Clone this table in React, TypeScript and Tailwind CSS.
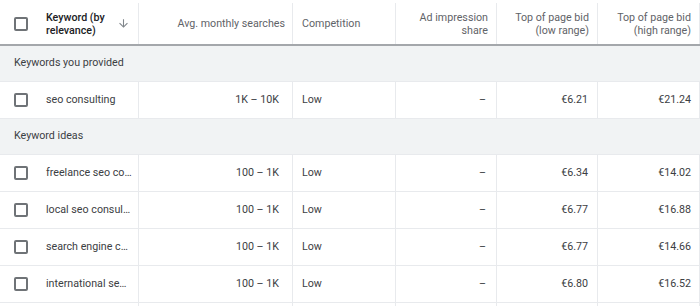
import React from "react";

const cols = "grid grid-cols-[139px_154px_103px_101px_101px_102px]";

function Checkbox() {
  return <div className="w-[14px] h-[14px] border-2 border-[#6f7377] rounded-[2px] shrink-0" />;
}

function ArrowDown() {
  return (
    <svg width="13" height="13" viewBox="0 0 24 24" className="shrink-0">
      <path d="M20 12l-1.41-1.41L13 16.17V4h-2v12.17l-5.58-5.59L4 12l8 8 8-8z" fill="#80868b" />
    </svg>
  );
}

type Row = { kw: string; avg: string; comp: string; share: string; low: string; high: string };

const provided: Row[] = [
  { kw: "seo consulting", avg: "1K – 10K", comp: "Low", share: "–", low: "€6.21", high: "€21.24" },
];

const ideas: Row[] = [
  { kw: "freelance seo co…", avg: "100 – 1K", comp: "Low", share: "–", low: "€6.34", high: "€14.02" },
  { kw: "local seo consul…", avg: "100 – 1K", comp: "Low", share: "–", low: "€6.77", high: "€16.88" },
  { kw: "search engine c…", avg: "100 – 1K", comp: "Low", share: "–", low: "€6.77", high: "€14.66" },
  { kw: "international se…", avg: "100 – 1K", comp: "Low", share: "–", low: "€6.80", high: "€16.52" },
];

function DataRow({ r }: { r: Row }) {
  const cell = "h-[36px] flex items-center border-r border-[#e8eaed]";
  return (
    <div className={`${cols} border-b border-[#e8eaed]`}>
      <div className={`${cell} pl-[14px] gap-[18px] whitespace-nowrap overflow-hidden`}>
        <Checkbox />
        <span>{r.kw}</span>
      </div>
      <div className={`${cell} justify-end pr-[13px]`}>{r.avg}</div>
      <div className={`${cell} pl-[9px]`}>{r.comp}</div>
      <div className={`${cell} justify-end pr-[10px]`}>{r.share}</div>
      <div className={`${cell} justify-end pr-[9px]`}>{r.low}</div>
      <div className={`${cell} justify-end pr-[8px]`}>{r.high}</div>
    </div>
  );
}

function GroupRow({ label }: { label: string }) {
  return (
    <div className="h-[36px] flex items-center pl-[14px] bg-[#f1f3f4] border-b border-[#e8eaed]">
      {label}
    </div>
  );
}

export default function App() {
  const hcell = "h-[41px] flex items-center border-r border-[#e8eaed]";
  return (
    <div
      className="w-[700px] h-[306px] bg-white overflow-hidden text-[10.7px] text-[#3c4043]"
      style={{ fontFamily: "Roboto, 'Liberation Sans', Arial, sans-serif" }}
    >
      <div className="pt-[3px] border-b-2 border-[#a4a7ab]">
        <div className={`${cols} text-[#5f6368] leading-[13px]`}>
          <div className={`${hcell} pl-[14px]`}>
            <Checkbox />
            <div className="ml-[18px] font-medium text-[#202124] w-[64px] pt-[1px]">
              Keyword (by relevance)
            </div>
            <div className="ml-[7px]">
              <ArrowDown />
            </div>
          </div>
          <div className={`${hcell} justify-end pr-[7px]`}>Avg. monthly searches</div>
          <div className={`${hcell} pl-[9px]`}>Competition</div>
          <div className={`${hcell} justify-end text-right pr-[8px]`}>
            Ad impression
            <br />
            share
          </div>
          <div className={`${hcell} justify-end text-right pr-[8px]`}>
            Top of page bid
            <br />
            (low range)
          </div>
          <div className={`${hcell} justify-end text-right pr-[8px]`}>
            Top of page bid
            <br />
            (high range)
          </div>
        </div>
      </div>
      <GroupRow label="Keywords you provided" />
      {provided.map((r) => (
        <DataRow key={r.kw} r={r} />
      ))}
      <GroupRow label="Keyword ideas" />
      {ideas.map((r) => (
        <DataRow key={r.kw} r={r} />
      ))}
      <div className={`${cols}`}>
        {[0, 1, 2, 3, 4, 5].map((i) => (
          <div key={i} className="h-[36px] border-r border-[#e8eaed]" />
        ))}
      </div>
    </div>
  );
}
